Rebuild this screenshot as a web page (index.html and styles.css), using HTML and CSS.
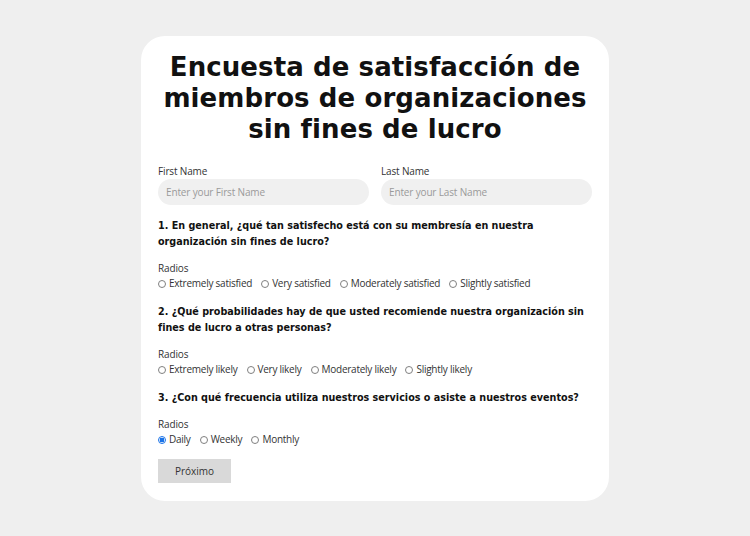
FILE: index.html
```html
<!DOCTYPE html>
<html lang="es">
<head>
<meta charset="utf-8">
<title>Encuesta</title>
<link rel="stylesheet" href="styles.css">
</head>
<body>
<main class="card">
  <h1 class="title">Encuesta de satisfacción de miembros de organizaciones sin fines de lucro</h1>
  <div class="names">
    <div class="field">
      <label class="label">First Name</label>
      <input class="input" type="text" placeholder="Enter your First Name">
    </div>
    <div class="field">
      <label class="label">Last Name</label>
      <input class="input" type="text" placeholder="Enter your Last Name">
    </div>
  </div>

  <p class="question">1. En general, ¿qué tan satisfecho está con su membresía en nuestra organización sin fines de lucro?</p>
  <div class="group">
    <div class="label">Radios</div>
    <div class="options">
      <label class="opt"><input class="radio" type="radio" name="q1">Extremely satisfied</label>
      <label class="opt"><input class="radio" type="radio" name="q1">Very satisfied</label>
      <label class="opt"><input class="radio" type="radio" name="q1">Moderately satisfied</label>
      <label class="opt"><input class="radio" type="radio" name="q1">Slightly satisfied</label>
    </div>
  </div>

  <p class="question">2. ¿Qué probabilidades hay de que usted recomiende nuestra organización sin fines de lucro a otras personas?</p>
  <div class="group">
    <div class="label">Radios</div>
    <div class="options">
      <label class="opt"><input class="radio" type="radio" name="q2">Extremely likely</label>
      <label class="opt"><input class="radio" type="radio" name="q2">Very likely</label>
      <label class="opt"><input class="radio" type="radio" name="q2">Moderately likely</label>
      <label class="opt"><input class="radio" type="radio" name="q2">Slightly likely</label>
    </div>
  </div>

  <p class="question">3. ¿Con qué frecuencia utiliza nuestros servicios o asiste a nuestros eventos?</p>
  <div class="group">
    <div class="label">Radios</div>
    <div class="options">
      <label class="opt"><input class="radio" type="radio" name="q3" checked>Daily</label>
      <label class="opt"><input class="radio" type="radio" name="q3">Weekly</label>
      <label class="opt"><input class="radio" type="radio" name="q3">Monthly</label>
    </div>
  </div>

  <button class="btn" type="button">Próximo</button>
</main>
</body>
</html>
```

FILE: styles.css
```css
html, body {
  margin: 0;
  padding: 0;
}
body {
  background: #efefef;
  font-family: "Open Sans", "Liberation Sans", sans-serif;
  color: #222;
  height: 536px;
  overflow: hidden;
}
.card {
  width: 468px;
  box-sizing: border-box;
  margin: 36px auto 0;
  background: #fff;
  border-radius: 24px;
  padding: 16px 17px 18px;
}
.title {
  margin: 0;
  font-family: "DejaVu Sans", sans-serif;
  font-weight: 700;
  font-size: 26px;
  line-height: 31px;
  letter-spacing: 0.1px;
  text-align: center;
  color: #111;
}
.names {
  display: grid;
  grid-template-columns: 1fr 1fr;
  column-gap: 12px;
  margin-top: 19px;
}
.field {
  display: flex;
  flex-direction: column;
}
.label {
  display: block;
  font-size: 10px;
  line-height: 15px;
  letter-spacing: -0.15px;
  color: #333;
}
.input {
  margin-top: 0;
  height: 26px;
  box-sizing: border-box;
  border: none;
  border-radius: 13px;
  background: #f0f0f0;
  padding: 0 8px;
  font-family: "Open Sans", sans-serif;
  font-size: 10px;
  letter-spacing: -0.15px;
  color: #333;
  outline: none;
}
.input::placeholder {
  color: #9a9a9a;
}
.question {
  margin: 13px 0 0;
  font-family: "DejaVu Sans Condensed", "DejaVu Sans", sans-serif;
  font-stretch: condensed;
  font-weight: 700;
  font-size: 10.7px;
  line-height: 16px;
  letter-spacing: 0;
  color: #111;
}
.group {
  margin-top: 11px;
}
.options {
  display: flex;
  gap: 9px;
}
.opt {
  display: flex;
  align-items: center;
  font-size: 10px;
  line-height: 15px;
  letter-spacing: -0.25px;
  color: #333;
}
.radio {
  appearance: none;
  -webkit-appearance: none;
  width: 8px;
  height: 8px;
  margin: 0 3px 0 0;
  border: 1px solid #808080;
  border-radius: 50%;
  box-sizing: border-box;
  background: #fff;
}
.radio:checked {
  border-color: #1a73e8;
  background: radial-gradient(circle, #1a73e8 0 2.2px, #fff 2.6px);
}
.btn {
  display: block;
  margin-top: 12px;
  width: 73px;
  height: 24px;
  border: none;
  border-radius: 0;
  background: #d9d9d9;
  font-family: "Open Sans", sans-serif;
  font-size: 10px;
  color: #333;
  padding: 0;
}
```
